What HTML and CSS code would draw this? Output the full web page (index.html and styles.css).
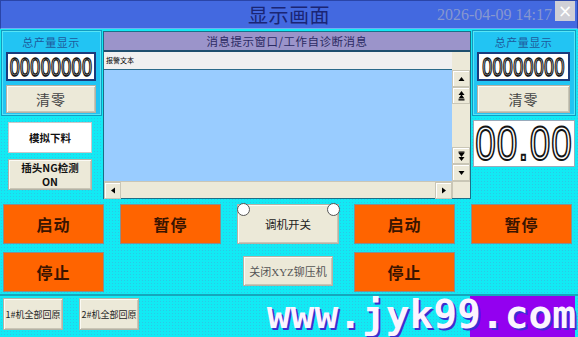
FILE: index.html
```html
<!DOCTYPE html>
<html lang="zh">
<head>
<meta charset="utf-8">
<title>显示画面</title>
<link rel="stylesheet" href="styles.css">
</head>
<body>
<div class="screen">
  <header class="titlebar">
    <div class="tb-side"></div>
    <h1 class="tb-title">显示画面</h1>
    <div class="tb-side tb-right">
      <span class="clock">2026-04-09 14:17</span>
      <span class="close">×</span>
    </div>
  </header>

  <div class="top">
    <div class="col col-left">
      <section class="panel">
        <div class="panel-title">总产量显示</div>
        <div class="counter"><span class="seg seg-small">00000000</span></div>
        <div class="btn beige btn-clear">清零</div>
      </section>
      <div class="btn white side-btn sim">模拟下料</div>
      <div class="btn beige side-btn ng">插头NG检测<br>ON</div>
    </div>

    <section class="msgwin">
      <div class="msg-head">消息提示窗口/工作自诊断消息</div>
      <div class="msg-body">
        <div class="list">
          <div class="list-head">报警文本</div>
          <div class="list-area"></div>
        </div>
        <div class="vscroll">
          <div class="sb-top"></div>
          <div class="sb-btn"><svg width="7" height="6" viewBox="0 0 7 6"><path d="M3.5 1 L6.5 5 L0.5 5 Z" fill="#000"/></svg></div>
          <div class="sb-btn"><svg width="7" height="10" viewBox="0 0 7 10"><path d="M3.5 0 L6.5 4 L0.5 4 Z M3.5 3.5 L6.5 7.5 L0.5 7.5 Z" fill="#000"/><rect x="0.5" y="8.2" width="6" height="1.3" fill="#000"/></svg></div>
          <div class="sb-track"></div>
          <div class="sb-btn"><svg width="7" height="10" viewBox="0 0 7 10"><rect x="0.5" y="0.5" width="6" height="1.3" fill="#000"/><path d="M3.5 6 L6.5 2 L0.5 2 Z M3.5 10 L6.5 6 L0.5 6 Z" fill="#000"/></svg></div>
          <div class="sb-btn"><svg width="7" height="6" viewBox="0 0 7 6"><path d="M3.5 5 L6.5 1 L0.5 1 Z" fill="#000"/></svg></div>
        </div>
        <div class="hscroll">
          <div class="sb-btn h"><svg width="6" height="7" viewBox="0 0 6 7"><path d="M1 3.5 L5 0.5 L5 6.5 Z" fill="#000"/></svg></div>
          <div class="sb-htrack"></div>
          <div class="sb-btn h"><svg width="6" height="7" viewBox="0 0 6 7"><path d="M5 3.5 L1 0.5 L1 6.5 Z" fill="#000"/></svg></div>
        </div>
        <div class="sb-corner"></div>
      </div>
    </section>

    <div class="col col-right">
      <section class="panel">
        <div class="panel-title">总产量显示</div>
        <div class="counter"><span class="seg seg-small">00000000</span></div>
        <div class="btn beige btn-clear">清零</div>
      </section>
      <div class="bigdisp"><span class="seg seg-big">00.00</span></div>
    </div>
  </div>

  <div class="controls">
    <div class="btn orange">启动</div>
    <div class="btn orange">暂停</div>
    <div class="btn beige tune">调机开关<span class="lamp lamp-l"></span><span class="lamp lamp-r"></span></div>
    <div class="btn orange">启动</div>
    <div class="btn orange">暂停</div>
    <div class="btn orange">停止</div>
    <div class="cell"></div>
    <div class="cell"><div class="btn beige xyz">关闭XYZ铆压机</div></div>
    <div class="btn orange">停止</div>
    <div class="cell"></div>
  </div>

  <footer class="bottom">
    <div class="btn beige home">1#机全部回原</div>
    <div class="btn beige home">2#机全部回原</div>
    <div class="logo">www.jyk99.com</div>
  </footer>
</div>
</body>
</html>
```

FILE: styles.css
```css
* { box-sizing: border-box; }
html, body { margin: 0; padding: 0; }
body {
  width: 578px;
  height: 337px;
  overflow: hidden;
  font-family: "Noto Sans CJK SC", "Liberation Sans", sans-serif;
  background-color: #12eaf4;
  background-image: radial-gradient(circle, #2cc8e6 0.6px, transparent 0.9px);
  background-size: 3px 3px;
}
.screen { width: 578px; height: 337px; display: flex; flex-direction: column; }

/* title bar */
.titlebar {
  height: 29px;
  background: #4369e0;
  border: 1px solid #2a45a8;
  border-bottom: 1px solid #6fb0f0;
  display: grid;
  grid-template-columns: 1fr auto 1fr;
  align-items: center;
}
.tb-title {
  margin: 0;
  font-size: 20px;
  font-weight: normal;
  color: #1a2574;
  line-height: 27px;
  letter-spacing: 0.5px;
}
.tb-right {
  display: flex;
  justify-content: flex-end;
  align-items: flex-start;
  align-self: stretch;
  min-width: 0;
}
.clock {
  flex: none;
  font-family: "Liberation Serif", "DejaVu Serif", serif;
  font-size: 16px;
  line-height: 16px;
  color: #8797cf;
  margin-top: 6px;
  margin-right: 3px;
  white-space: nowrap;
}
.close {
  flex: none;
  width: 20px;
  height: 20px;
  background: #cfcfd6;
  color: #ffffff;
  font-family: "DejaVu Sans", sans-serif;
  font-size: 17px;
  line-height: 20px;
  text-align: center;
  margin-right: 2px;
}

/* top area */
.top {
  display: flex;
  gap: 2px;
  padding: 2px 2px 0 2px;
  height: 173px;
}
.col { display: flex; flex-direction: column; }
.col-left { width: 99px; }
.col-right { width: 102px; }
.panel {
  height: 84px;
  background: #22c4f3;
  border: 1px solid #57e4f6;
  outline: 1px solid #139ac0;
  display: flex;
  flex-direction: column;
  padding: 0 4px 0 3px;
}
.panel-title {
  height: 20px;
  font-size: 11px;
  line-height: 20px;
  text-align: center;
  color: #1e5a9c;
  letter-spacing: 0.5px;
}
.counter {
  height: 29px;
  background: #fff;
  border: 2px solid #1b3b7c;
  display: flex;
  align-items: center;
  justify-content: center;
}
.seg {
  font-family: "Liberation Sans", "DejaVu Sans", sans-serif;
  font-weight: normal;
  color: #fff;
  -webkit-text-stroke: 1px #141414;
  display: inline-block;
}
.seg-small { font-size: 18px; line-height: 14px; transform: scaleY(1.45); letter-spacing: 0.3px; }
.seg-big { font-size: 37px; line-height: 28px; transform: scaleY(1.32); -webkit-text-stroke: 1.5px #141414; letter-spacing: 1px; }

.btn {
  display: flex;
  align-items: center;
  justify-content: center;
  text-align: center;
}
.beige {
  background: #ece9d8;
  border: 1px solid #b5b2a4;
  box-shadow: inset 1px 1px 0 #fbfaf4, inset -1px -1px 0 #c9c6b6;
}
.white { background: #fff; border: 1px solid #c8c8c8; }
.btn-clear {
  height: 28px;
  margin-top: 4px;
  font-size: 14px;
  color: #454545;
  letter-spacing: 1px;
}
.side-btn {
  width: 84px;
  margin-left: 6px;
  font-size: 10.5px;
  font-weight: bold;
  color: #111;
  line-height: 14px;
}
.sim { height: 31px; margin-top: 7px; }
.ng { height: 31px; margin-top: 6px; }

/* message window */
.msgwin {
  width: 368px;
  height: 168px;
  display: flex;
  flex-direction: column;
  border: 1px solid #1a6f88;
}
.msg-head {
  height: 20px;
  background: #9b94ca;
  border-bottom: 2px solid #1f4f6e;
  color: #2c2b63;
  font-size: 11.5px;
  line-height: 19px;
  text-align: center;
  letter-spacing: 0.5px;
}
.msg-body {
  flex: 1;
  display: grid;
  grid-template-columns: 1fr 18px;
  grid-template-rows: 1fr 17px;
}
.list { display: flex; flex-direction: column; background: #99ccff; }
.list-head {
  height: 18px;
  background: #f0f0f0;
  border-bottom: 1px solid #2a6a8a;
  font-size: 7px;
  line-height: 17px;
  padding-left: 2px;
  color: #000;
}
.list-area { flex: 1; }
.vscroll {
  background: #ece9d8;
  display: flex;
  flex-direction: column;
}
.sb-top { height: 18px; }
.sb-btn {
  height: 17px;
  display: flex;
  align-items: center;
  justify-content: center;
  background: #ece9d8;
  border: 1px solid #c9c6b6;
  box-shadow: inset 1px 1px 0 #fff;
}
.sb-btn.h { width: 17px; height: 17px; }
.sb-track { flex: 1; }
.hscroll {
  background: #ece9d8;
  display: flex;
  border-top: 1px solid #c9c6b6;
}
.sb-htrack { flex: 1; }
.sb-corner { background: #ece9d8; border-left: 1px solid #c9c6b6; border-top: 1px solid #c9c6b6; }

.bigdisp {
  height: 47px;
  margin-top: 5px;
  background: #fff;
  border: 1px solid #9ab;
  display: flex;
  align-items: center;
  justify-content: center;
}

/* controls */
.controls {
  display: grid;
  grid-template-columns: repeat(5, 101px);
  grid-template-rows: 40px 40px;
  column-gap: 16px;
  row-gap: 8px;
  padding-left: 3px;
  margin-top: 2px;
}
.orange {
  background: #ff6400;
  border: 1px solid #8c8c8c;
  color: #3a1400;
  font-weight: bold;
  font-size: 16px;
  letter-spacing: 1px;
}
.tune {
  position: relative;
  font-size: 11.5px;
  color: #222;
  width: 102px;
}
.lamp {
  position: absolute;
  top: -2px;
  width: 13px;
  height: 13px;
  border-radius: 50%;
  background: #fff;
  border: 1px solid #555;
}
.lamp-l { left: -1px; }
.lamp-r { right: -2px; }
.cell { display: flex; }
.xyz {
  width: 90px;
  height: 30px;
  margin: 4px 0 0 6px;
  font-size: 11px;
  color: #555;
  font-family: "Liberation Serif", "Noto Sans CJK SC", serif;
}

/* bottom */
.bottom {
  margin-top: 2px;
  flex: 1;
  border-top: 2px solid #16a6bc;
  display: flex;
  align-items: flex-start;
  padding-left: 3px;
  background-image: linear-gradient(to left, transparent 3px, #9300f0 3px, #9300f0 108px, transparent 108px);
}
.home {
  width: 60px;
  height: 32px;
  margin-top: 2px;
  margin-right: 16px;
  font-size: 9px;
  color: #222;
  white-space: nowrap;
}
.logo {
  flex: 1;
  text-align: right;
  padding-right: 2px;
  font-family: "DejaVu Sans Mono", monospace;
  font-weight: bold;
  font-size: 39.5px;
  line-height: 37px;
  color: #fbf4ff;
  text-shadow: 2px 2px 0 #3a2fd0;
  white-space: nowrap;
}
```
